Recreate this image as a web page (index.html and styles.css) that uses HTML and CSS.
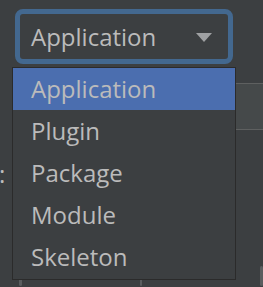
FILE: index.html
```html
<!DOCTYPE html>
<html lang="en">
<head>
    <meta charset="UTF-8">
    <title>New Project</title>
    <link rel="stylesheet" href="styles.css">
</head>
<body>
    <div class="form">
        <!-- Project type combo box (focused, popup open) -->
        <div class="combo">
            <span class="combo-value">Application</span>
            <span class="combo-arrow"></span>
        </div>

        <!-- Rows partly hidden behind the popup -->
        <div class="field-row">
            <div class="text-field"></div>
        </div>
        <div class="label-row">
            <span class="label">:</span>
        </div>
        <div class="button-row">
            <span class="check"></span>
            <span class="check"></span>
            <span class="check"></span>
        </div>
    </div>

    <!-- Popup list for the combo box -->
    <ul class="popup">
        <li class="item selected">Application</li>
        <li class="item">Plugin</li>
        <li class="item">Package</li>
        <li class="item">Module</li>
        <li class="item">Skeleton</li>
    </ul>
</body>
</html>
```

FILE: styles.css
```css
body {
    margin: 0;
    width: 263px;
    height: 287px;
    overflow: hidden;
    background-color: #3c3f41;
    font-family: "Open Sans", "Noto Sans", sans-serif;
    font-size: 24px;
    color: #bbbbbb;
    position: relative;
}

.form {
    padding-top: 9px;
}

/* Combo box */
.combo {
    margin-left: 15px;
    width: 218px;
    height: 55px;
    box-sizing: border-box;
    border: 5px solid #43688f;
    border-radius: 8px;
    background-color: #3c3f41;
    display: flex;
    align-items: center;
    justify-content: space-between;
    padding: 0 16px 0 11px;
}

.combo-value {
    line-height: 45px;
}

.combo-arrow {
    width: 0;
    height: 0;
    border-left: 8.5px solid transparent;
    border-right: 8.5px solid transparent;
    border-top: 9px solid #9fa1a3;
    margin-top: 2px;
}

/* Background rows */
.field-row {
    margin-top: 19px;
    display: flex;
    justify-content: flex-end;
}

.text-field {
    width: 160px;
    height: 45px;
    margin-right: -10px;
    border: 1px solid #5e6060;
    background-color: #45494a;
}

.label-row {
    margin-top: 32px;
    height: 24px;
    line-height: 24px;
}

.label {
    display: inline-block;
    margin-left: -1px;
}

.button-row {
    margin-top: 80px;
    display: flex;
    gap: 118px;
    padding-left: 19px;
}

.check {
    width: 26px;
    height: 20px;
    border-radius: 6px;
    background-color: #5a5d5f;
}

/* Popup list */
.popup {
    position: absolute;
    top: 67px;
    left: 12px;
    width: 222px;
    margin: 0;
    padding: 0 0 1px;
    list-style: none;
    background-color: #3c3f41;
    border: 1px solid #2b2b2b;
}

.item {
    height: 42px;
    line-height: 42px;
    padding-left: 18px;
}

.item.selected {
    background-color: #4b6eaf;
}
```
